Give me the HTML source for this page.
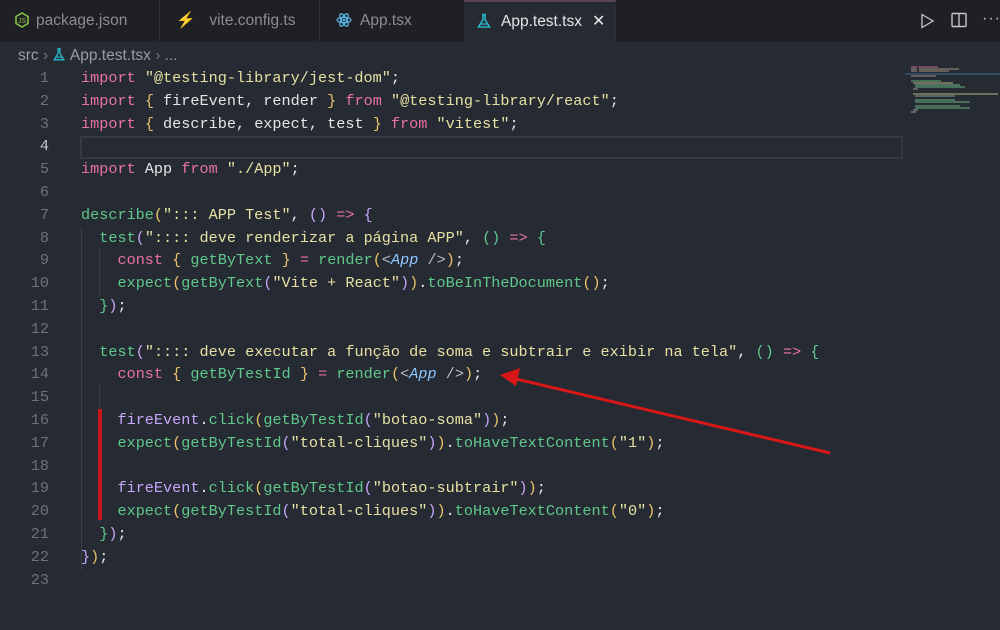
<!DOCTYPE html>
<html><head><meta charset="utf-8"><style>
*{margin:0;padding:0;box-sizing:border-box}
body{width:1000px;height:630px;background:#262a33;overflow:hidden;position:relative;font-family:"Liberation Sans",sans-serif}
.tabs{position:absolute;left:0;top:0;width:1000px;height:42px;background:#1f2023}
.tab{position:absolute;top:0;height:42px;color:#8b8d92;font-size:15.5px;line-height:42px;border-right:1px solid #2d2f33}
.tab.active{background:#262a33;color:#e6e6e6;border-top:2px solid #5c4458;line-height:40px}
.crumb{position:absolute;left:18px;top:44px;font-size:15.5px;color:#9a9ca3;line-height:24px}
.code{position:absolute;left:0;top:67px;font-family:"Liberation Mono",monospace;font-size:15.2px;line-height:22.8px;white-space:pre;color:#e6e6e6}
.ln{position:absolute;left:0;width:49px;text-align:right;color:#6d717c}
.l{position:absolute;left:81px}
.k{color:#e872a4}.s{color:#e6e1a3}.f{color:#5fc88a}.v{color:#c6a6fa}.j{color:#8cc7ff;font-style:italic}.y{color:#e9c46a}.p{color:#c6a6fa}.g{color:#5fc88a}.w{color:#b8bcc6}
</style></head><body>
<div class="tabs">
 <div class="tab" style="left:0;width:160px;padding-left:14px"><svg width="16" height="16" viewBox="0 0 16 16" style="vertical-align:-3px;margin-right:6px"><polygon points="8,1 14,4.5 14,11.5 8,15 2,11.5 2,4.5" fill="none" stroke="#8cc84b" stroke-width="1.5"/><text x="8" y="11" font-size="7" fill="#8cc84b" text-anchor="middle" font-family="Liberation Sans">JS</text></svg>package.json</div>
 <div class="tab" style="left:160px;width:160px;padding-left:16px"><span style="color:#f7b91e;margin-right:14px">⚡</span>vite.config.ts</div>
 <div class="tab" style="left:320px;width:145px;padding-left:16px"><svg width="16" height="16" viewBox="0 0 16 16" style="vertical-align:-3px;margin-right:8px"><g fill="none" stroke="#5ab8e6" stroke-width="1.2"><ellipse cx="8" cy="8" rx="7" ry="2.7"/><ellipse cx="8" cy="8" rx="7" ry="2.7" transform="rotate(60 8 8)"/><ellipse cx="8" cy="8" rx="7" ry="2.7" transform="rotate(120 8 8)"/></g><circle cx="8" cy="8" r="1.4" fill="#5ab8e6"/></svg>App.tsx</div>
 <div class="tab active" style="left:464px;width:152px;padding-left:12px"><svg width="16" height="16" viewBox="0 0 16 16" style="vertical-align:-3px;margin-right:9px"><path d="M6 1.5h4M7 1.5v5L2.5 14h11L9 6.5v-5" fill="none" stroke="#26b3c4" stroke-width="1.6"/><path d="M4.5 11h7" stroke="#26b3c4" stroke-width="1.4"/></svg>App.test.tsx<span style="margin-left:10px;font-size:16px">✕</span></div>
 <svg style="position:absolute;left:919px;top:13px" width="16" height="16" viewBox="0 0 16 16"><path d="M3 1.5L14 8L3 14.5Z" fill="none" stroke="#c5c5c5" stroke-width="1.3"/></svg>
 <svg style="position:absolute;left:951px;top:12px" width="16" height="16" viewBox="0 0 16 16"><rect x="1" y="1.5" width="14" height="13" rx="1" fill="none" stroke="#c5c5c5" stroke-width="1.4"/><path d="M8 1.5v13" stroke="#c5c5c5" stroke-width="1.4"/></svg>
 <div style="position:absolute;left:982px;top:10px;color:#c5c5c5;font-size:16px;letter-spacing:1px">···</div>
</div>
<div class="crumb">src <span style="color:#777">›</span> <svg width="14" height="15" viewBox="0 0 16 16" style="vertical-align:-2px"><path d="M6 1.5h4M7 1.5v5L2.5 14h11L9 6.5v-5" fill="none" stroke="#26b3c4" stroke-width="1.6"/><path d="M4.5 11h7" stroke="#26b3c4" stroke-width="1.4"/></svg> App.test.tsx <span style="color:#777">›</span> ...</div>
<div style="position:absolute;left:80px;top:136px;width:823px;height:23px;border:2px solid #353a45"></div>
<div style="position:absolute;left:81px;top:227px;width:1px;height:343px;background:#3a3e48"></div>
<div style="position:absolute;left:99px;top:250px;width:1px;height:46px;background:#3a3e48"></div>
<div style="position:absolute;left:99px;top:386px;width:1px;height:137px;background:#3a3e48"></div>
<div style="position:absolute;left:98px;top:409px;width:4px;height:111px;background:#c8161d"></div>
<div class="code">
<div class="ln" style="top:0">1</div><div class="ln" style="top:22.8px">2</div><div class="ln" style="top:45.6px">3</div><div class="ln" style="top:68.4px;color:#c8c8c8">4</div><div class="ln" style="top:91.2px">5</div><div class="ln" style="top:114px">6</div><div class="ln" style="top:136.8px">7</div><div class="ln" style="top:159.6px">8</div><div class="ln" style="top:182.4px">9</div><div class="ln" style="top:205.2px">10</div><div class="ln" style="top:228px">11</div><div class="ln" style="top:250.8px">12</div><div class="ln" style="top:273.6px">13</div><div class="ln" style="top:296.4px">14</div><div class="ln" style="top:319.2px">15</div><div class="ln" style="top:342px">16</div><div class="ln" style="top:364.8px">17</div><div class="ln" style="top:387.6px">18</div><div class="ln" style="top:410.4px">19</div><div class="ln" style="top:433.2px">20</div><div class="ln" style="top:456px">21</div><div class="ln" style="top:478.8px">22</div><div class="ln" style="top:501.6px">23</div>
<div class="l" style="top:0"><span class="k">import</span> <span class="s">"@testing-library/jest-dom"</span>;</div>
<div class="l" style="top:22.8px"><span class="k">import</span> <span class="y">{</span> fireEvent, render <span class="y">}</span> <span class="k">from</span> <span class="s">"@testing-library/react"</span>;</div>
<div class="l" style="top:45.6px"><span class="k">import</span> <span class="y">{</span> describe, expect, test <span class="y">}</span> <span class="k">from</span> <span class="s">"vitest"</span>;</div>
<div class="l" style="top:91.2px"><span class="k">import</span> App <span class="k">from</span> <span class="s">"./App"</span>;</div>
<div class="l" style="top:136.8px"><span class="f">describe</span><span class="y">(</span><span class="s">"::: APP Test"</span>, <span class="p">()</span> <span class="k">=&gt;</span> <span class="p">{</span></div>
<div class="l" style="top:159.6px">  <span class="f">test</span><span class="p">(</span><span class="s">":::: deve renderizar a página APP"</span>, <span class="g">()</span> <span class="k">=&gt;</span> <span class="g">{</span></div>
<div class="l" style="top:182.4px">    <span class="k">const</span> <span class="y">{</span> <span class="f">getByText</span> <span class="y">}</span> <span class="k">=</span> <span class="f">render</span><span class="y">(</span><span class="w">&lt;</span><span class="j">App</span> <span class="w">/&gt;</span><span class="y">)</span>;</div>
<div class="l" style="top:205.2px">    <span class="f">expect</span><span class="y">(</span><span class="f">getByText</span><span class="p">(</span><span class="s">"Vite + React"</span><span class="p">)</span><span class="y">)</span>.<span class="f">toBeInTheDocument</span><span class="y">()</span>;</div>
<div class="l" style="top:228px">  <span class="g">}</span><span class="p">)</span>;</div>
<div class="l" style="top:273.6px">  <span class="f">test</span><span class="p">(</span><span class="s">":::: deve executar a função de soma e subtrair e exibir na tela"</span>, <span class="g">()</span> <span class="k">=&gt;</span> <span class="g">{</span></div>
<div class="l" style="top:296.4px">    <span class="k">const</span> <span class="y">{</span> <span class="f">getByTestId</span> <span class="y">}</span> <span class="k">=</span> <span class="f">render</span><span class="y">(</span><span class="w">&lt;</span><span class="j">App</span> <span class="w">/&gt;</span><span class="y">)</span>;</div>
<div class="l" style="top:342px">    <span class="v">fireEvent</span>.<span class="f">click</span><span class="y">(</span><span class="f">getByTestId</span><span class="p">(</span><span class="s">"botao-soma"</span><span class="p">)</span><span class="y">)</span>;</div>
<div class="l" style="top:364.8px">    <span class="f">expect</span><span class="y">(</span><span class="f">getByTestId</span><span class="p">(</span><span class="s">"total-cliques"</span><span class="p">)</span><span class="y">)</span>.<span class="f">toHaveTextContent</span><span class="y">(</span><span class="s">"1"</span><span class="y">)</span>;</div>
<div class="l" style="top:410.4px">    <span class="v">fireEvent</span>.<span class="f">click</span><span class="y">(</span><span class="f">getByTestId</span><span class="p">(</span><span class="s">"botao-subtrair"</span><span class="p">)</span><span class="y">)</span>;</div>
<div class="l" style="top:433.2px">    <span class="f">expect</span><span class="y">(</span><span class="f">getByTestId</span><span class="p">(</span><span class="s">"total-cliques"</span><span class="p">)</span><span class="y">)</span>.<span class="f">toHaveTextContent</span><span class="y">(</span><span class="s">"0"</span><span class="y">)</span>;</div>
<div class="l" style="top:456px">  <span class="g">}</span><span class="p">)</span>;</div>
<div class="l" style="top:478.8px"><span class="p">}</span><span class="y">)</span>;</div>
</div>
<svg style="position:absolute;left:905px;top:64px" width="95" height="60">
<g stroke-width="1.2">
<path d="M6 3h6M13 3h20" stroke="#a05a80"/><path d="M6 5h6M14 5h40" stroke="#8a7f70"/><path d="M6 7h6M14 7h30" stroke="#8a7f70"/>
<path d="M0 10h95" stroke="#2f4a66" stroke-width="2"/>
<path d="M6 12h25" stroke="#8a7f70"/>
<path d="M6 17h30" stroke="#5a9a70"/><path d="M8 19h40" stroke="#9a9a70"/><path d="M10 21h45" stroke="#6a9a80"/><path d="M10 23h50" stroke="#5a9a70"/><path d="M8 25h5" stroke="#888"/>
<path d="M8 30h85" stroke="#9a9a70"/><path d="M10 32h40" stroke="#7a8a80"/>
<path d="M10 36h40" stroke="#5a9a70"/><path d="M10 38h55" stroke="#5a9a70"/>
<path d="M10 42h45" stroke="#5a9a70"/><path d="M10 44h55" stroke="#5a9a70"/>
<path d="M8 46h5M6 48h5" stroke="#888"/>
</g></svg>
<svg style="position:absolute;left:0;top:0" width="1000" height="630"><line x1="830" y1="453" x2="512" y2="378" stroke="#d81818" stroke-width="3"/><polygon points="500,375 520,368 516,386" fill="#d81818"/></svg>
</body></html>
